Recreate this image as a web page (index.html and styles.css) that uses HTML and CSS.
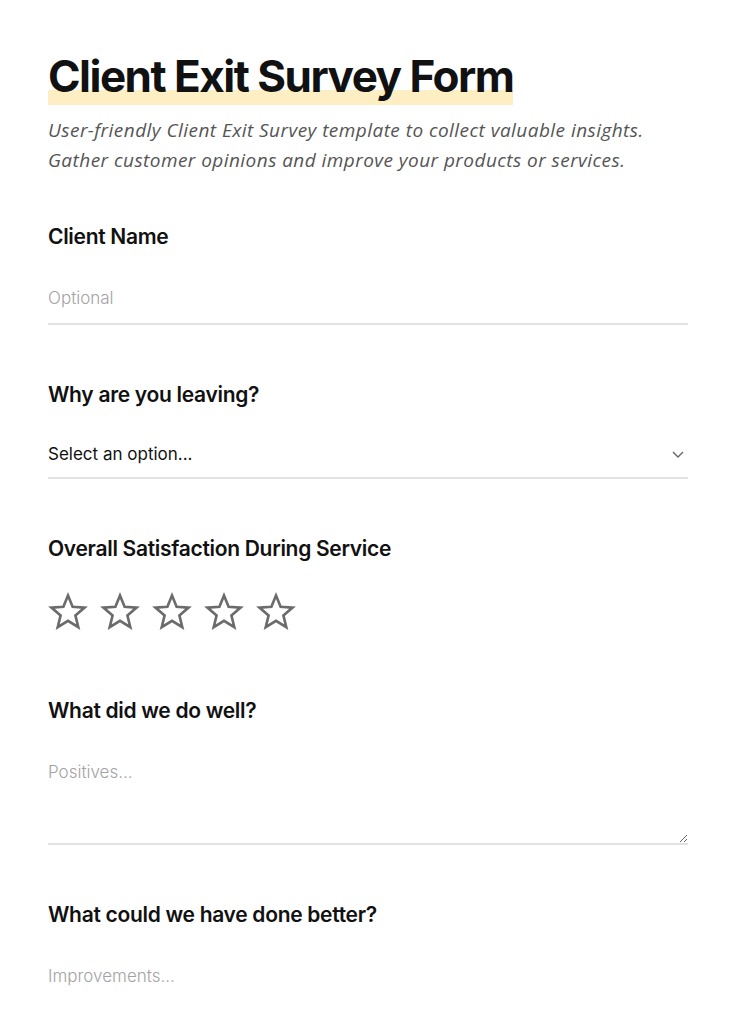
FILE: index.html
```html
<!DOCTYPE html>
<html lang="en">

<head>
    <meta charset="UTF-8">
    <meta name="viewport" content="width=device-width, initial-scale=1.0">
    <title>Client Exit Survey Form</title>
    <link rel="stylesheet" href="styles.css">
</head>

<body>
    <div class="container">
        <h1><span class="highlight">Client Exit Survey Form</span></h1>
        <p class="intro">User-friendly Client Exit Survey template to collect valuable insights.<br>
            Gather customer opinions and improve your products or services.</p>

        <form onsubmit="return false;">
            <div class="field">
                <label for="name">Client Name</label>
                <input type="text" id="name" class="input-field" placeholder="Optional">
            </div>

            <div class="field">
                <label for="reason">Why are you leaving?</label>
                <div class="select-wrap">
                    <select id="reason" class="input-field select-field">
                        <option>Select an option...</option>
                        <option>Price</option>
                        <option>Service quality</option>
                        <option>Found another provider</option>
                        <option>Other</option>
                    </select>
                    <svg class="chevron" width="14" height="14" viewBox="0 0 14 14">
                        <path d="M2 5 L7 10 L12 5" fill="none" stroke="#666" stroke-width="1.4"/>
                    </svg>
                </div>
            </div>

            <div class="field">
                <label>Overall Satisfaction During Service</label>
                <div class="stars">
                    <svg class="star" viewBox="0 0 40 40"><path d="M20 3.5 L24.6 14.8 L36.6 15.6 L27.4 23.4 L30.3 35.2 L20 28.8 L9.7 35.2 L12.6 23.4 L3.4 15.6 L15.4 14.8 Z"/></svg>
                    <svg class="star" viewBox="0 0 40 40"><path d="M20 3.5 L24.6 14.8 L36.6 15.6 L27.4 23.4 L30.3 35.2 L20 28.8 L9.7 35.2 L12.6 23.4 L3.4 15.6 L15.4 14.8 Z"/></svg>
                    <svg class="star" viewBox="0 0 40 40"><path d="M20 3.5 L24.6 14.8 L36.6 15.6 L27.4 23.4 L30.3 35.2 L20 28.8 L9.7 35.2 L12.6 23.4 L3.4 15.6 L15.4 14.8 Z"/></svg>
                    <svg class="star" viewBox="0 0 40 40"><path d="M20 3.5 L24.6 14.8 L36.6 15.6 L27.4 23.4 L30.3 35.2 L20 28.8 L9.7 35.2 L12.6 23.4 L3.4 15.6 L15.4 14.8 Z"/></svg>
                    <svg class="star" viewBox="0 0 40 40"><path d="M20 3.5 L24.6 14.8 L36.6 15.6 L27.4 23.4 L30.3 35.2 L20 28.8 L9.7 35.2 L12.6 23.4 L3.4 15.6 L15.4 14.8 Z"/></svg>
                </div>
            </div>

            <div class="field">
                <label for="well">What did we do well?</label>
                <textarea id="well" class="input-field text-area" placeholder="Positives..."></textarea>
            </div>

            <div class="field">
                <label for="better">What could we have done better?</label>
                <textarea id="better" class="input-field text-area" placeholder="Improvements..."></textarea>
            </div>
        </form>
    </div>
</body>

</html>
```

FILE: styles.css
```css
body {
    font-family: Inter, "Noto Sans", sans-serif;
    color: #111;
    background: #fff;
    margin: 0;
}

.container {
    padding: 48px 48px 40px 48px;
}

h1 {
    font-size: 44px;
    font-weight: 700;
    letter-spacing: -1.5px;
    line-height: 56px;
    margin: 0;
}

.highlight {
    display: inline-block;
    height: 57px;
    background: linear-gradient(to bottom, transparent 0, transparent 42px, #fdefc3 42px, #fdefc3 57px);
}

.intro {
    font-family: "Open Sans", sans-serif;
    font-style: italic;
    font-size: 19px;
    letter-spacing: 0.45px;
    line-height: 30px;
    color: #555;
    margin: 10px 0 0 0;
}

.field {
    margin-top: 56px;
}

.intro + form .field:first-child {
    margin-top: 48px;
}

label {
    display: block;
    font-size: 21px;
    font-weight: 600;
    letter-spacing: -0.3px;
    line-height: 28px;
    margin-bottom: 22px;
}

.input-field {
    display: block;
    width: 100%;
    box-sizing: border-box;
    font-family: Inter, "Noto Sans", sans-serif;
    font-size: 17px;
    line-height: 26px;
    color: #111;
    padding: 12px 0;
    border: none;
    border-bottom: 2px solid #e2e2e2;
    border-radius: 0;
    background: transparent;
    outline: none;
}

.input-field::placeholder {
    color: #a3a3a3;
    font-weight: 300;
}

.select-wrap {
    position: relative;
}

.select-field {
    appearance: none;
    -webkit-appearance: none;
    padding: 10px 0;
    height: 48px;
}

.chevron {
    position: absolute;
    right: 3px;
    top: 16px;
    pointer-events: none;
}

.stars {
    display: flex;
    gap: 12px;
    padding-top: 7px;
    padding-bottom: 9px;
}

.star {
    width: 40px;
    height: 40px;
}

.star path {
    fill: none;
    stroke: #6b6b6b;
    stroke-width: 2.6;
    stroke-linejoin: miter;
}

.text-area {
    height: 98px;
    resize: vertical;
}
```
